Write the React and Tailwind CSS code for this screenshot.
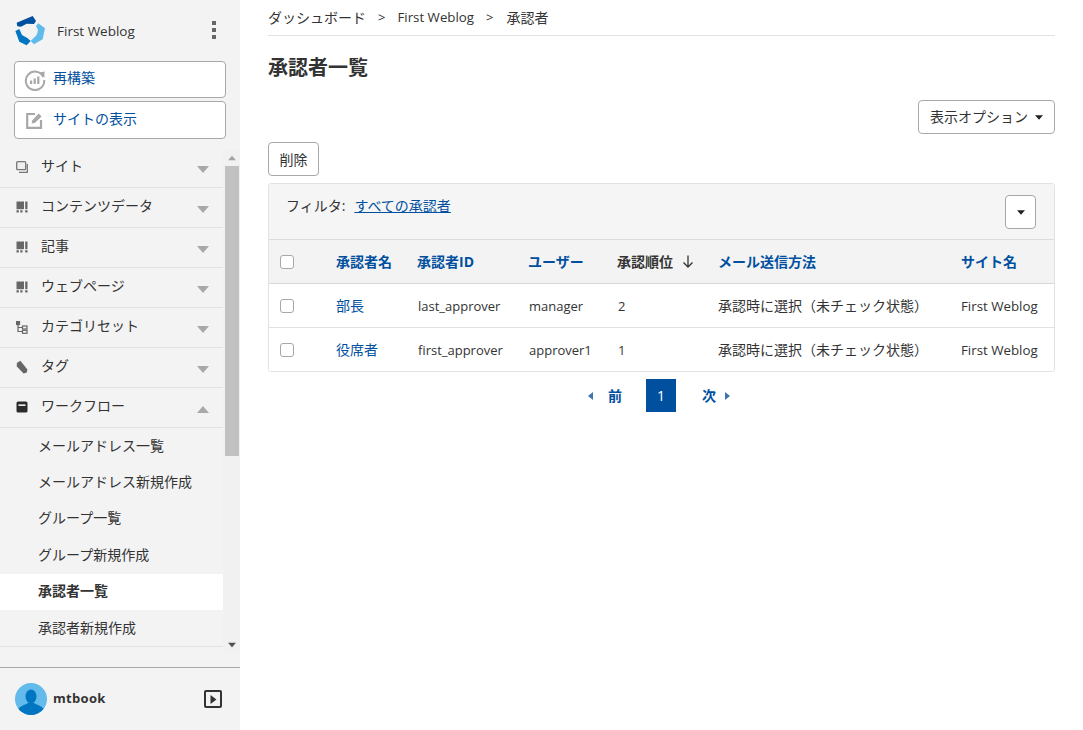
import React from "react";

const Caret = ({ up, className = "" }) => (
  <svg width="12" height="7" viewBox="0 0 12 7" className={className}>
    <path d={up ? "M0 7L6 0L12 7Z" : "M0 0H12L6 7Z"} fill="currentColor" />
  </svg>
);

const IconSite = () => (
  <svg width="12" height="12" viewBox="0 0 12 12" fill="none" stroke="#777" strokeWidth="1.3">
    <rect x="0.7" y="0.7" width="9" height="8" rx="1" fill="#eee" />
    <path d="M3 11.3H11.3V3" />
  </svg>
);
const IconData = () => (
  <svg width="12" height="12" viewBox="0 0 12 12" fill="#666">
    <rect x="0.5" y="0.5" width="7.5" height="7.7" />
    <rect x="9.2" y="0.5" width="2.3" height="7.7" />
    <rect x="0.5" y="9.2" width="2.3" height="2.3" />
    <rect x="4.3" y="9.2" width="2.2" height="2.3" />
    <rect x="9.2" y="9.2" width="2.3" height="2.3" />
  </svg>
);
const IconCat = () => (
  <svg width="12" height="13" viewBox="0 0 12 13" fill="none" stroke="#666" strokeWidth="1.2">
    <rect x="0.5" y="0.5" width="3" height="3" fill="#666" />
    <path d="M2 3V10.5H6M2 6.5H6" />
    <rect x="6.5" y="5" width="4.5" height="3" />
    <rect x="6.5" y="9.3" width="4.5" height="3" />
  </svg>
);
const IconTag = () => (
  <svg width="12" height="14" viewBox="0 0 12 14" fill="#666">
    <path d="M0.8 3L4.4 0.8L11.4 9.4L10.8 12.4L7.6 13.4L0.8 6.6Z" />
  </svg>
);
const IconFlow = () => (
  <svg width="12" height="12" viewBox="0 0 12 12">
    <rect x="0.5" y="0.5" width="11" height="11" rx="1.6" fill="#2b2b2b" />
    <rect x="2.5" y="3.4" width="7" height="1.5" fill="#fff" />
  </svg>
);
const IconRebuild = () => (
  <svg width="22" height="22" viewBox="0 0 22 22" fill="none">
    <path d="M19.4 8A9.2 9.2 0 1 0 20.2 11" stroke="#a8a8a8" strokeWidth="2" />
    <path d="M15.5 3.6L20.6 2.4L20.4 8.8Z" fill="#a8a8a8" />
    <rect x="6" y="11.5" width="2.2" height="3.5" fill="#a8a8a8" />
    <rect x="9.6" y="9.5" width="2.2" height="5.5" fill="#a8a8a8" />
    <rect x="13.2" y="7.5" width="2.2" height="7.5" fill="#a8a8a8" />
  </svg>
);
const IconView = () => (
  <svg width="17" height="17" viewBox="0 0 17 17" fill="none">
    <path d="M9 2H1.2V15.8H15V8" stroke="#a8a8a8" strokeWidth="2.2" />
    <path d="M5.6 11.6L6.2 8.6L12.6 1.6L15.6 4.4L8.8 11Z" fill="#a8a8a8" />
  </svg>
);
const Logo = () => (
  <svg width="30" height="30" viewBox="15 15 90 90">
    <path d="M20 35L68 15L78 30L72 39L50 38L33 47L22 46Z" fill="#00509f" />
    <path d="M85 37L105 52L98 85L72 100L62 90L80 72L84 58L78 45Z" fill="#60bbeb" />
    <path d="M16 60L28 54L36 72L52 81L62 90L50 103L28 92Z" fill="#0075c2" />
  </svg>
);
const Avatar = () => (
  <svg width="32" height="32" viewBox="0 0 32 32">
    <defs>
      <clipPath id="av"><circle cx="16" cy="16" r="16" /></clipPath>
    </defs>
    <g clipPath="url(#av)">
      <rect width="32" height="32" fill="#62bbeb" />
      <ellipse cx="16" cy="13.5" rx="5.5" ry="7" fill="#0075c2" />
      <path d="M2 28C4 23 10 22 13 20H19C22 22 28 23 30 28V32H2Z" fill="#0075c2" />
    </g>
  </svg>
);

const navItems = [
  ["サイト", IconSite],
  ["コンテンツデータ", IconData],
  ["記事", IconData],
  ["ウェブページ", IconData],
  ["カテゴリセット", IconCat],
  ["タグ", IconTag],
];
const subItems = ["メールアドレス一覧", "メールアドレス新規作成", "グループ一覧", "グループ新規作成", "承認者一覧", "承認者新規作成"];

const NavRow = ({ label, Icon, up }) => (
  <div className="h-10 flex items-center border-b border-[#e2e2e2] pl-4 pr-[14px] shrink-0">
    <span className="w-3 h-3 flex items-center justify-center -mt-[1px]"><Icon /></span>
    <span className="ml-[13px] text-[14px] text-[#333] flex-1 -mt-[4px]">{label}</span>
    <Caret up={up} className="text-[#a8a8a8] mt-[4px]" />
  </div>
);

const Sidebar = () => (
  <aside className="w-[240px] h-[730px] shrink-0 bg-[#f3f3f3] flex flex-col">
    <div className="h-[61px] shrink-0 flex items-center pl-[15px] pr-[24px]">
      <Logo />
      <span className="ml-[12px] text-[13.5px] font-medium text-[#333] flex-1 mt-[1px]">First Weblog</span>
      <span className="flex flex-col gap-[3px] -mt-[1px]">
        <i className="block w-1 h-1 bg-[#666]" />
        <i className="block w-1 h-1 bg-[#666]" />
        <i className="block w-1 h-1 bg-[#666]" />
      </span>
    </div>
    <div className="mx-[14px] flex flex-col gap-[3px]">
      <a className="h-[37px] bg-white border border-[#a8a8a8] rounded-[4px] flex items-center pl-[9px] text-[14px] text-[#00509f]">
        <IconRebuild />
        <span className="ml-[7px] -mt-[5px]">再構築</span>
      </a>
      <a className="h-[38px] bg-white border border-[#a8a8a8] rounded-[4px] flex items-center pl-[11px] text-[14px] text-[#00509f]">
        <IconView />
        <span className="ml-[10px] -mt-[4px]">サイトの表示</span>
      </a>
    </div>
    <div className="mt-[11px] h-[503px] flex shrink-0 overflow-hidden">
      <nav className="w-[223px] shrink-0 flex flex-col -mt-[2px]">
        {navItems.map(([l, I]) => <NavRow key={l} label={l} Icon={I} />)}
        <NavRow label="ワークフロー" Icon={IconFlow} up />
        {subItems.map((s) => (
          <a
            key={s}
            className={
              "h-[36.4px] shrink-0 flex items-center pl-[38px] text-[14px] text-[#333] " +
              (s === "承認者一覧" ? "bg-white font-bold" : "")
            }
          >
            <span className="-mt-[2px]">{s}</span>
          </a>
        ))}
        <div className="border-t border-[#e2e2e2]" />
      </nav>
      <div className="w-[17px] shrink-0 bg-[#f1f1f1] flex flex-col items-center">
        <Caret up className="h-[16px] w-[8px] text-[#a3a3a3]" />
        <div className="w-[14px] h-[290px] bg-[#c1c1c1] ml-[1px]" />
        <div className="flex-1" />
        <Caret className="h-[16px] w-[8px] text-[#505050]" />
      </div>
    </div>
    <div className="mt-[14px] border-t border-[#a8a8a8] flex-1 flex items-center pl-[15px] pr-[18px]">
      <Avatar />
      <span className="ml-[6px] text-[13px] font-bold text-[#333] flex-1 tracking-[0.3px]">mtbook</span>
      <span className="w-[18px] h-[18px] border-2 border-[#333] rounded-[2px] flex items-center justify-center">
        <svg width="7" height="9" viewBox="0 0 7 9"><path d="M0.5 0L6.5 4.5L0.5 9Z" fill="#333" /></svg>
      </span>
    </div>
  </aside>
);

const cols = [
  ["承認者名", 81, "pl-[11px]"],
  ["承認者ID", 111, "pl-[11px]"],
  ["ユーザー", 89, "pl-[11px]"],
  ["承認順位", 100, "pl-[11px]"],
  ["メール送信方法", 243, "pl-[12px]"],
  ["サイト名", 105, "pl-[12px]"],
];

const rows = [
  ["部長", "last_approver", "manager", "2", "承認時に選択（未チェック状態）", "First Weblog"],
  ["役席者", "first_approver", "approver1", "1", "承認時に選択（未チェック状態）", "First Weblog"],
];

const cellClass = [
  "pl-[11px] text-[14px] text-[#00509f]",
  "pl-[12px] pt-[2px] text-[13px]",
  "pl-[12px] pt-[2px] text-[13px]",
  "pl-[12px] pt-[2px] text-[13px]",
  "pl-[12px] text-[14px]",
  "pl-[12px] pt-[2px] text-[13.3px]",
];

const Check = () => <span className="block w-[14px] h-[14px] rounded-[3px] bg-white border border-[#a8a8a8]" />;

const Main = () => (
  <main className="flex-1 pl-[28px] pr-[28px]">
    <div className="h-[36px] border-b border-[#e2e2e2] flex items-center text-[14px] text-[#333]">
      <span>ダッシュボード</span>
      <span className="mx-[12px] text-[13px]">&gt;</span>
      <span className="text-[13.3px]">First Weblog</span>
      <span className="ml-[12px] mr-[13px] text-[13px]">&gt;</span>
      <span>承認者</span>
    </div>
    <h1 className="mt-[18px] text-[20px] leading-[27px] font-bold text-[#333]">承認者一覧</h1>
    <div className="mt-[19px] flex justify-end">
      <button className="h-[34px] w-[137px] bg-white border border-[#a8a8a8] rounded-[4px] flex items-center justify-center text-[14px] text-[#333]">
        <span className="-mt-[2px]">表示オプション</span>
        <Caret className="ml-[7px] w-2 h-[5px] text-[#222]" />
      </button>
    </div>
    <button className="mt-[8px] block h-[34px] w-[51px] bg-white border border-[#a8a8a8] rounded-[4px] text-[14px] text-[#333]">削除</button>
    <div className="mt-[7px] border border-[#e2e2e2] rounded-[3px] overflow-hidden">
      <div className="h-[56px] bg-[#f5f5f5] flex items-start pl-[17px] pr-[18px] pt-[11px] border-b border-[#dcdcdc]">
        <span className="text-[14px] text-[#333]">フィルタ:</span>
        <a className="ml-[9px] text-[14px] text-[#00509f] underline flex-1">すべての承認者</a>
        <button className="w-[31px] h-[34px] bg-white border border-[#a8a8a8] rounded-[4px] flex items-center justify-center">
          <Caret className="w-2 h-[5px] text-[#222]" />
        </button>
      </div>
      <table className="w-full table-fixed text-[#333] border-separate border-spacing-0">
        <colgroup>
          <col className="w-[56px]" />
          {cols.map(([n, w]) => <col key={n} style={{ width: w }} />)}
        </colgroup>
        <thead>
          <tr className="bg-[#f3f3f3]">
            <th className="h-[44px] border-b border-[#d8d8d8] pl-[11px] text-left font-normal"><Check /></th>
            {cols.map(([n, , pad]) => (
              <th key={n} className={"h-[44px] border-b border-[#d8d8d8] text-left text-[14px] font-bold whitespace-nowrap " + pad + " " + (n === "承認順位" ? "text-[#333]" : "text-[#00509f]")}>
                <span className="inline-flex items-center">
                  {n}
                  {n === "承認順位" && (
                    <svg width="12" height="13" viewBox="0 0 12 13" fill="none" stroke="#333" strokeWidth="1.3" className="ml-[9px]">
                      <path d="M6 0.5V12M1.5 7.5L6 12L10.5 7.5" />
                    </svg>
                  )}
                </span>
              </th>
            ))}
          </tr>
        </thead>
        <tbody>
          {rows.map((r, i) => {
            const tdc = i === 0 ? "h-[44px] border-b border-[#e2e2e2] " : "h-[43px] ";
            return (
              <tr key={r[1]} className="bg-white">
                <td className={tdc + "pl-[11px]"}><Check /></td>
                {r.map((c, j) => (
                  <td key={j} className={tdc + "whitespace-nowrap " + cellClass[j]}>{c}</td>
                ))}
              </tr>
            );
          })}
        </tbody>
      </table>
    </div>
    <div className="mt-[7px] pr-[1px] flex justify-center items-center text-[14px] font-bold text-[#00509f]">
      <span className="flex items-center w-[58px]">
        <svg width="5" height="8" viewBox="0 0 5 8"><path d="M5 0V8L0 4Z" fill="#3f74ae" /></svg>
        <span className="ml-[15px]">前</span>
      </span>
      <span className="w-[30px] h-[33px] bg-[#00509f] text-white font-normal flex items-center justify-center">1</span>
      <span className="flex items-center w-[58px]">
        <span className="ml-[26px]">次</span>
        <svg width="5" height="8" viewBox="0 0 5 8" className="ml-[9px]"><path d="M0 0V8L5 4Z" fill="#3f74ae" /></svg>
      </span>
    </div>
  </main>
);

export default function App() {
  return (
    <div
      className="w-[1083px] h-[730px] flex bg-white overflow-hidden"
      style={{ fontFamily: '"Open Sans", "Noto Sans CJK JP", sans-serif' }}
    >
      <Sidebar />
      <Main />
    </div>
  );
}
